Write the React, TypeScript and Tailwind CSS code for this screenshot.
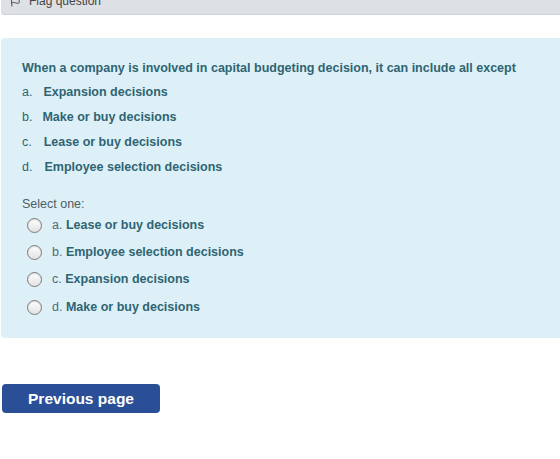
import { FiFlag } from 'react-icons/fi';

const options = [
  { letter: 'a.', text: 'Expansion decisions', gap: 'ml-[11px]' },
  { letter: 'b.', text: 'Make or buy decisions', gap: 'ml-[10px]' },
  { letter: 'c.', text: 'Lease or buy decisions', gap: 'ml-[12px]' },
  { letter: 'd.', text: 'Employee selection decisions', gap: 'ml-[12px]' },
];

const answers = [
  { letter: 'a.', text: 'Lease or buy decisions' },
  { letter: 'b.', text: 'Employee selection decisions' },
  { letter: 'c.', text: 'Expansion decisions' },
  { letter: 'd.', text: 'Make or buy decisions' },
];

function Radio() {
  return (
    <span className="w-[15px] h-[15px] rounded-full border border-[#7c7c7c] bg-gradient-to-b from-white to-[#e2e2e2] shadow-[inset_0_1px_1px_rgba(0,0,0,0.15)] shrink-0" />
  );
}

export default function App() {
  return (
    <div className="w-[560px] h-[459px] bg-white overflow-hidden font-['Liberation_Sans',Arial,sans-serif]">
      <div className="ml-[1px] h-[15px] bg-[#dde1e5] border-b border-[#cdd2d7] rounded-bl-[3px] overflow-hidden">
        <div className="flex items-center gap-[8px] pl-[9px] -mt-[7px] text-[12px] text-[#444] leading-[16px]">
          <FiFlag className="text-[11px]" />
          <span>Flag question</span>
        </div>
      </div>

      <div className="mt-[23px] ml-[1px] h-[300px] bg-[#ddf0f7] rounded-l-[4px] pl-[21px] pt-[22px] text-[#2f6473]">
        <p className="text-[12.5px] font-bold leading-[16px]">
          When a company is involved in capital budgeting decision, it can include all except
        </p>
        <ul className="mt-[8px] flex flex-col gap-[9px] text-[12.5px] font-bold leading-[16px]">
          {options.map((o) => (
            <li key={o.letter} className="flex">
              <span className="font-normal">{o.letter}</span>
              <span className={o.gap}>{o.text}</span>
            </li>
          ))}
        </ul>

        <div className="mt-[21px] text-[12.5px] text-[#4d5f66] leading-[16px]">Select one:</div>
        <div className="mt-[5px] ml-[5px] flex flex-col gap-[11px]">
          {answers.map((a, i) => (
            <label key={a.letter} className={`flex items-center gap-[10px] text-[12.5px] leading-[16px] ${i === 3 ? 'mt-[1px]' : ''}`}>
              <Radio />
              <span>
                <span className="text-[#4d6b78]">{a.letter} </span>
                <span className="font-bold">{a.text}</span>
              </span>
            </label>
          ))}
        </div>
      </div>

      <button className="mt-[46px] ml-[2px] w-[158px] h-[29px] rounded-[4px] bg-[#2b4f97] text-white text-[15.5px] font-bold flex items-center justify-center">
        Previous page
      </button>
    </div>
  );
}
